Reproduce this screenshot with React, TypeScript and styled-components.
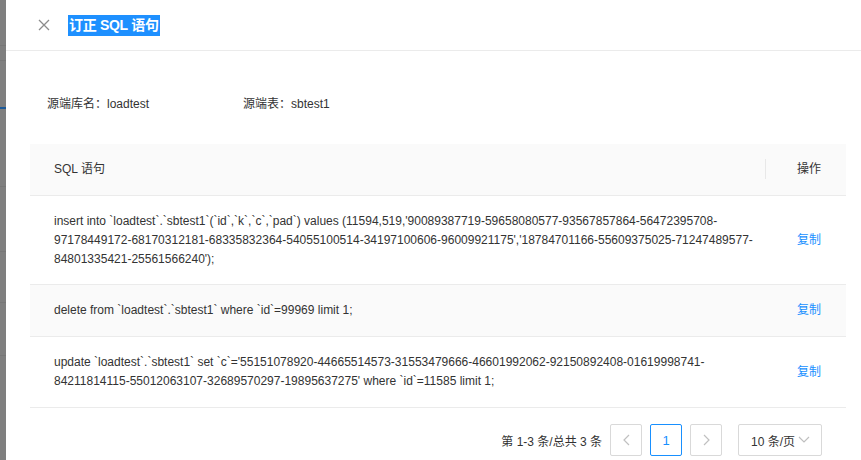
import React from "react";
import styled, { createGlobalStyle } from "styled-components";

const Global = createGlobalStyle`
  html, body { margin: 0; padding: 0; width: 861px; height: 460px; overflow: hidden; background: #fff; }
  body { font-family: "Liberation Sans", "Noto Sans CJK SC", sans-serif; font-size: 12px; color: #333; }
`;

const Screen = styled.div`
  display: flex;
  width: 861px;
  height: 460px;
`;

const Mask = styled.div`
  width: 6px;
  flex-shrink: 0;
  background: #7f7f7f;
  position: relative;
  overflow: hidden;
`;

const MaskMark = styled.div<{ $top: number; $color: string; $h?: number }>`
  position: absolute;
  left: 0;
  right: 0;
  top: ${(p) => p.$top}px;
  height: ${(p) => p.$h ?? 1}px;
  background: ${(p) => p.$color};
`;

const Drawer = styled.div`
  flex: 1;
  display: flex;
  flex-direction: column;
  background: #fff;
`;

const Header = styled.div`
  height: 51px;
  box-sizing: border-box;
  border-bottom: 1px solid #ebebeb;
  display: flex;
  align-items: center;
  padding-left: 31px;
  gap: 18px;
`;

const CloseBtn = styled.button`
  width: 13px;
  height: 13px;
  padding: 0;
  border: 0;
  background: none;
  display: flex;
  align-items: center;
  justify-content: center;
  cursor: pointer;
`;

const Title = styled.span`
  font-size: 14px;
  font-weight: 700;
  color: #fff;
  background: #1e90ff;
  line-height: 21px;
  padding: 0 1px;
  letter-spacing: -0.3px;
`;

const Body = styled.div`
  padding: 40px 15px 0 24px;
  display: flex;
  flex-direction: column;
`;

const InfoRow = styled.div`
  display: flex;
  padding-left: 17px;
  height: 23px;
  align-items: center;
  margin-bottom: 30px;
`;

const InfoItem = styled.div`
  width: 196px;
  color: #333;
`;

const Table = styled.div`
  display: flex;
  flex-direction: column;
`;

const Row = styled.div<{ $bg?: string }>`
  display: grid;
  grid-template-columns: 1fr 81px;
  background: ${(p) => p.$bg ?? "#fff"};
  border-bottom: 1px solid #ebebeb;
`;

const Cell = styled.div<{ $head?: boolean }>`
  padding: 16px 8px 16px 24px;
  line-height: 18.86px;
  color: #333;
  overflow-wrap: anywhere;
  display: flex;
  align-items: center;
  position: relative;
`;

const ActionCell = styled(Cell)`
  padding: 16px 24px 16px 16px;
  &::before {
    content: "";
    display: ${(p) => (p.$head ? "block" : "none")};
    position: absolute;
    left: 0;
    top: 15px;
    bottom: 16px;
    width: 1px;
    background: #e8e8e8;
  }
`;

const Link = styled.a`
  color: #1890ff;
  cursor: pointer;
  margin-left: 16px;
`;

const HeadLabel = styled.span`
  margin-left: 16px;
`;

const Pager = styled.div`
  display: flex;
  justify-content: flex-end;
  align-items: center;
  margin-top: 16px;
  padding-right: 24px;
  height: 32px;
`;

const Total = styled.span`
  margin-right: 8px;
  color: #333;
`;

const PageBtn = styled.div<{ $active?: boolean }>`
  width: 32px;
  height: 32px;
  box-sizing: border-box;
  border: 1px solid ${(p) => (p.$active ? "#1890ff" : "#d9d9d9")};
  border-radius: 2px;
  display: flex;
  align-items: center;
  justify-content: center;
  color: ${(p) => (p.$active ? "#1890ff" : "#bfbfbf")};
  margin-right: 8px;
  font-size: 13px;
`;

const SizeSelect = styled.div`
  width: 84px;
  height: 32px;
  box-sizing: border-box;
  border: 1px solid #d9d9d9;
  border-radius: 2px;
  margin-left: 8px;
  display: flex;
  align-items: center;
  justify-content: space-between;
  padding: 0 11px 0 12px;
  color: #333;
`;

const rows = [
  {
    sql: "insert into `loadtest`.`sbtest1`(`id`,`k`,`c`,`pad`) values (11594,519,'90089387719-59658080577-93567857864-56472395708-97178449172-68170312181-68335832364-54055100514-34197100606-96009921175','18784701166-55609375025-71247489577-84801335421-25561566240');",
    bg: "#fff",
  },
  { sql: "delete from `loadtest`.`sbtest1` where `id`=99969 limit 1;", bg: "#fafafa" },
  {
    sql: "update `loadtest`.`sbtest1` set `c`='55151078920-44665514573-31553479666-46601992062-92150892408-01619998741-84211814115-55012063107-32689570297-19895637275' where `id`=11585 limit 1;",
    bg: "#fff",
  },
];

const Chevron = ({ dir, color }: { dir: "left" | "right" | "down"; color: string }) => {
  const d =
    dir === "left" ? "M7 1 L2 6 L7 11" : dir === "right" ? "M2 1 L7 6 L2 11" : "M1 3 L6 8 L11 3";
  const w = dir === "down" ? 12 : 9;
  return (
    <svg width={w} height={12} viewBox={`0 0 ${w} 12`} fill="none">
      <path d={d} stroke={color} strokeWidth="1.2" />
    </svg>
  );
};

export default function App() {
  return (
    <>
      <Global />
      <Screen>
        <Mask>
          <MaskMark $top={45} $color="#777" />
          <MaskMark $top={60} $color="#777" />
          <MaskMark $top={107} $color="#1c5a99" $h={2} />
          <MaskMark $top={186} $color="#777" />
          <MaskMark $top={251} $color="#777" />
          <MaskMark $top={302} $color="#777" />
          <MaskMark $top={355} $color="#777" />
        </Mask>
        <Drawer>
          <Header>
            <CloseBtn aria-label="close">
              <svg width="12" height="12" viewBox="0 0 12 12">
                <path d="M1 1 L11 11 M11 1 L1 11" stroke="#8c8c8c" strokeWidth="1.3" />
              </svg>
            </CloseBtn>
            <Title>订正 SQL 语句</Title>
          </Header>
          <Body>
            <InfoRow>
              <InfoItem>源端库名：loadtest</InfoItem>
              <InfoItem>源端表：sbtest1</InfoItem>
            </InfoRow>
            <Table>
              <Row $bg="#fafafa">
                <Cell $head>SQL 语句</Cell>
                <ActionCell $head>
                  <HeadLabel>操作</HeadLabel>
                </ActionCell>
              </Row>
              {rows.map((r, i) => (
                <Row key={i} $bg={r.bg}>
                  <Cell>{r.sql}</Cell>
                  <ActionCell>
                    <Link>复制</Link>
                  </ActionCell>
                </Row>
              ))}
            </Table>
            <Pager>
              <Total>第 1-3 条/总共 3 条</Total>
              <PageBtn>
                <Chevron dir="left" color="#c0c0c0" />
              </PageBtn>
              <PageBtn $active>1</PageBtn>
              <PageBtn>
                <Chevron dir="right" color="#c0c0c0" />
              </PageBtn>
              <SizeSelect>
                <span>10 条/页</span>
                <Chevron dir="down" color="#bfbfbf" />
              </SizeSelect>
            </Pager>
          </Body>
        </Drawer>
      </Screen>
    </>
  );
}
